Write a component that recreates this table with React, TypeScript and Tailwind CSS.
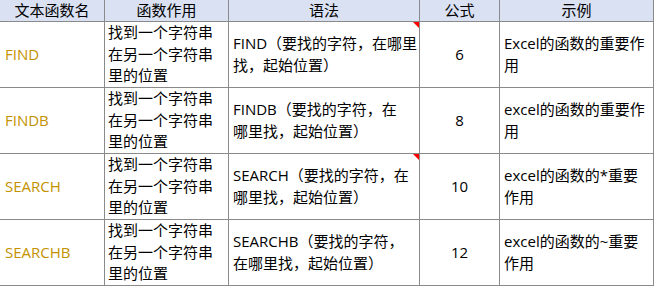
import React from "react";

const rows = [
  {
    name: "FIND",
    syntax: ["FIND（要找的字符，在哪里", "找，起始位置）"],
    n: "6",
    ex: ["Excel的函数的重要作", "用"],
    flag: true,
  },
  {
    name: "FINDB",
    syntax: ["FINDB（要找的字符，在", "哪里找，起始位置）"],
    n: "8",
    ex: ["excel的函数的重要作", "用"],
    flag: false,
  },
  {
    name: "SEARCH",
    syntax: ["SEARCH（要找的字符，在", "哪里找，起始位置）"],
    n: "10",
    ex: ["excel的函数的*重要", "作用"],
    flag: true,
  },
  {
    name: "SEARCHB",
    syntax: ["SEARCHB（要找的字符，", "在哪里找，起始位置）"],
    n: "12",
    ex: ["excel的函数的~重要", "作用"],
    flag: false,
  },
];

const cell = "border-r border-b border-[#8a8a8a] overflow-hidden";

export default function App() {
  return (
    <div
      className="w-[654px] h-[287px] bg-white text-black text-[15px]"
      style={{ fontFamily: '"Open Sans", "Noto Sans CJK SC", sans-serif' }}
    >
      <div className="grid grid-cols-[105px_124px_191px_80px_154px] grid-rows-[22px_66px_66px_66px_66px]">
        {["文本函数名", "函数作用", "语法", "公式", "示例"].map((h) => (
          <div
            key={h}
            className={`${cell} bg-[#d9e1f2] flex items-center justify-center leading-[21px]`}
          >
            {h}
          </div>
        ))}
        {rows.map((r) => (
          <React.Fragment key={r.name}>
            <div className={`${cell} flex items-center pl-[5px] text-[#c39200] leading-[21.5px]`}>
              {r.name}
            </div>
            <div className={`${cell} flex flex-col justify-center pl-[3px] leading-[21.6px]`}>
              <div>找到一个字符串</div>
              <div>在另一个字符串</div>
              <div>里的位置</div>
            </div>
            <div className={`${cell} relative flex flex-col justify-center pl-[4px] leading-[21.5px] whitespace-nowrap`}>
              {r.syntax.map((s) => (
                <div key={s}>{s}</div>
              ))}
              {r.flag && (
                <div className="absolute top-0 right-0 w-0 h-0 border-l-[6px] border-l-transparent border-t-[6px] border-t-[#ff0000]" />
              )}
            </div>
            <div className={`${cell} flex items-center justify-center leading-[21.5px]`}>{r.n}</div>
            <div className={`${cell} flex flex-col justify-center pl-[4px] leading-[21.5px] whitespace-nowrap`}>
              {r.ex.map((s) => (
                <div key={s}>{s}</div>
              ))}
            </div>
          </React.Fragment>
        ))}
      </div>
    </div>
  );
}
